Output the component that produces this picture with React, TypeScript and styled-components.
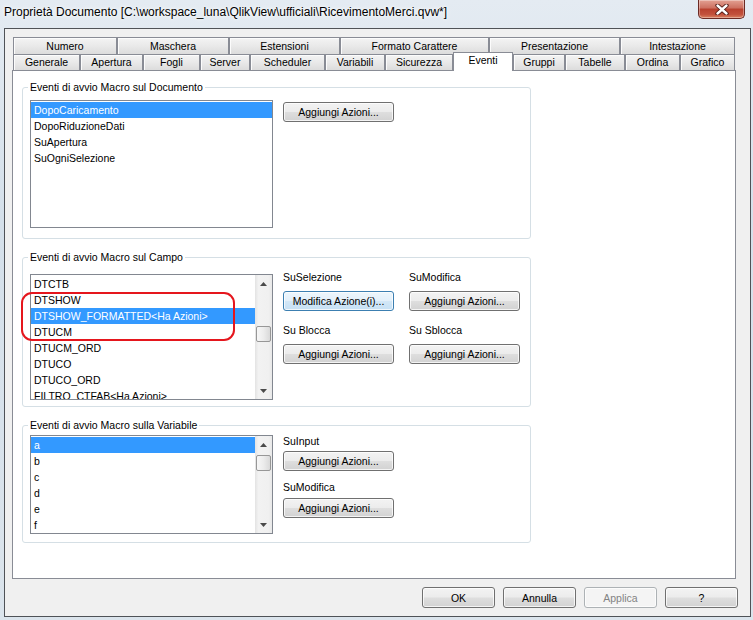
import styled, { createGlobalStyle } from "styled-components";

const GlobalStyle = createGlobalStyle`
  html, body {
    margin: 0;
    padding: 0;
  }
  body {
    width: 753px;
    height: 620px;
    overflow: hidden;
    background: linear-gradient(180deg, #e4ebf2 0%, #d5e0ea 35%, #dbe4ec 100%);
    font-family: "Liberation Sans", Arial, sans-serif;
    font-size: 10.5px;
    color: #000;
  }
`;

const Window = styled.div`
  width: 753px;
  height: 620px;
  display: flex;
  flex-direction: column;
`;

const TitleBar = styled.div`
  height: 28px;
  flex: none;
  display: flex;
  justify-content: space-between;
  align-items: flex-start;
  padding: 0 8px 0 4px;
  box-sizing: border-box;
`;

const Title = styled.div`
  margin-top: 5px;
  font-size: 12px;
  line-height: 14px;
  white-space: nowrap;
  text-shadow: 0 0 6px #fff, 0 0 3px #fff;
`;

const CloseButton = styled.div`
  width: 47px;
  height: 19px;
  box-sizing: border-box;
  border: 1px solid #6b2a24;
  border-top: none;
  border-radius: 0 0 5px 5px;
  background: linear-gradient(180deg, #e3a193 0%, #cc6f5f 45%, #b8402e 50%, #c2513c 80%, #d9805f 100%);
  box-shadow: inset 0 0 0 1px rgba(255, 255, 255, 0.35);
  display: flex;
  align-items: center;
  justify-content: center;
`;

const ClientArea = styled.div`
  flex: 1;
  margin: 0 2px 3px 4px;
  border: 1px solid #4f5257;
  background: #f0f0f0;
  display: flex;
  flex-direction: column;
  padding-top: 8px;
  min-height: 0;
`;

const TabStrip = styled.div`
  margin-left: 8px;
  display: flex;
  flex-direction: column;
`;

const TabRow = styled.div<{ $h: number }>`
  display: flex;
  align-items: flex-start;
  height: ${(p) => p.$h}px;
`;

const Tab = styled.div<{ $w: number; $h: number; $active?: boolean }>`
  box-sizing: border-box;
  flex: none;
  width: ${(p) => p.$w}px;
  height: ${(p) => (p.$active ? p.$h + 3 : p.$h)}px;
  margin-top: ${(p) => (p.$active ? -2 : 0)}px;
  border: 1px solid #898c95;
  border-bottom: none;
  background: ${(p) => (p.$active ? "#ffffff" : "linear-gradient(180deg, #f4f4f4 0%, #e9e9e9 50%, #dcdcdc 100%)")};
  box-shadow: ${(p) => (p.$active ? "none" : "inset 1px 1px 0 #fcfcfc")};
  position: ${(p) => (p.$active ? "relative" : "static")};
  z-index: ${(p) => (p.$active ? 1 : 0)};
  text-align: center;
  line-height: ${(p) => p.$h - 1}px;
  padding-bottom: ${(p) => (p.$active ? 3 : 0)}px;
  white-space: nowrap;
`;

const Panel = styled.div`
  flex: 1;
  margin: 0 14px 0 7px;
  border: 1px solid #898c95;
  background: #ffffff;
  padding: 9px 0 0 9px;
  display: flex;
  flex-direction: column;
  gap: 11px;
`;

const Group = styled.fieldset<{ $pt: number; $pb: number }>`
  margin: 0;
  width: 509px;
  min-inline-size: 0;
  box-sizing: border-box;
  border: 1px solid #d5dfe5;
  border-radius: 3px;
  padding: ${(p) => p.$pt}px 7px ${(p) => p.$pb}px 7px;
`;

const Legend = styled.legend`
  padding: 0 2px;
  margin-left: -2px;
  line-height: 14px;
  font-size: 10.5px;
`;

const GroupBody = styled.div`
  display: flex;
  align-items: flex-start;
  gap: 10px;
`;

const ListWrap = styled.div<{ $mt: number }>`
  position: relative;
  margin-top: ${(p) => p.$mt}px;
`;

const List = styled.div<{ $h: number }>`
  box-sizing: border-box;
  width: 243px;
  height: ${(p) => p.$h}px;
  border: 1px solid #828790;
  background: #ffffff;
  display: flex;
  overflow: hidden;
`;

const Rows = styled.div`
  flex: 1;
  min-width: 0;
  padding-top: 1px;
  overflow: hidden;
`;

const Row = styled.div<{ $selected?: boolean }>`
  height: 16px;
  line-height: 16px;
  padding-left: 3px;
  white-space: nowrap;
  overflow: hidden;
  background: ${(p) => (p.$selected ? "#3399ff" : "transparent")};
  color: ${(p) => (p.$selected ? "#ffffff" : "#000000")};
`;

const ScrollBar = styled.div`
  width: 17px;
  flex: none;
  display: flex;
  flex-direction: column;
  background: linear-gradient(90deg, #e3e3e3 0%, #f2f2f2 20%, #f0f0f0 80%, #e8e8e8 100%);
`;

const ArrowButton = styled.div`
  height: 17px;
  flex: none;
  display: flex;
  align-items: center;
  justify-content: center;
`;

const Track = styled.div`
  flex: 1;
`;

const Thumb = styled.div<{ $top: number }>`
  box-sizing: border-box;
  height: 16px;
  margin: ${(p) => p.$top}px 1px 0 1px;
  border: 1px solid #979797;
  border-radius: 2px;
  background: linear-gradient(90deg, #f7f7f7 0%, #ececec 50%, #d9d9d9 100%);
`;

const Annotation = styled.div`
  position: absolute;
  left: -9px;
  top: 18px;
  width: 214px;
  height: 49px;
  box-sizing: border-box;
  border: 2px solid #e5161d;
  border-radius: 11px;
  pointer-events: none;
`;

const ActionGrid = styled.div<{ $rowGap: number }>`
  display: grid;
  grid-template-columns: 111px 111px;
  column-gap: 15px;
  row-gap: ${(p) => p.$rowGap}px;
`;

const ActionSlot = styled.div<{ $labelGap: number }>`
  display: flex;
  flex-direction: column;
  gap: ${(p) => p.$labelGap}px;
`;

const SlotLabel = styled.div`
  line-height: 14px;
  white-space: nowrap;
`;

const Button = styled.button<{ $focused?: boolean; $mt?: number }>`
  box-sizing: border-box;
  width: 111px;
  height: 20px;
  margin: ${(p) => p.$mt ?? 0}px 0 0 0;
  padding: 0;
  flex: none;
  font-family: "Liberation Sans", Arial, sans-serif;
  font-size: 10.5px;
  color: #000;
  border: 1px solid ${(p) => (p.$focused ? "#3c7fb1" : "#707070")};
  border-radius: 3px;
  background: ${(p) =>
    p.$focused
      ? "linear-gradient(180deg, #edf6fc 0%, #e3f0fa 48%, #d2e7f7 52%, #c6e0f4 100%)"
      : "linear-gradient(180deg, #f3f3f3 0%, #ececec 48%, #dedede 52%, #d2d2d2 100%)"};
  box-shadow: inset 0 0 0 1px rgba(255, 255, 255, 0.75);
`;

const Footer = styled.div`
  flex: none;
  display: flex;
  justify-content: flex-end;
  gap: 8px;
  padding: 8px 12px 8px 0;
`;

const DialogButton = styled(Button)<{ $disabled?: boolean }>`
  width: 73px;
  height: 21px;
  border-color: ${(p) => (p.$disabled ? "#adb2b5" : "#707070")};
  background: ${(p) =>
    p.$disabled
      ? "#f4f4f4"
      : "linear-gradient(180deg, #f3f3f3 0%, #ececec 48%, #dedede 52%, #d2d2d2 100%)"};
  color: ${(p) => (p.$disabled ? "#838383" : "#000")};
`;

function Arrow({ down }: { down?: boolean }) {
  return (
    <svg width="7" height="4" viewBox="0 0 7 4">
      <path d={down ? "M0 0h7L3.5 4z" : "M0 4h7L3.5 0z"} fill="#4a4a4a" />
    </svg>
  );
}

function CloseGlyph() {
  return (
    <svg width="14" height="11" viewBox="0 0 14 11">
      <path d="M2.5 1.5l9 8M11.5 1.5l-9 8" stroke="#4a1510" strokeWidth="4.2" strokeLinecap="round" />
      <path d="M2.5 1.5l9 8M11.5 1.5l-9 8" stroke="#ffffff" strokeWidth="2.4" strokeLinecap="round" />
    </svg>
  );
}

type ListBoxProps = {
  items: string[];
  selected: number;
  height: number;
  thumbTop?: number;
};

function ListBox({ items, selected, height, thumbTop }: ListBoxProps) {
  return (
    <List $h={height}>
      <Rows>
        {items.map((item, i) => (
          <Row key={item} $selected={i === selected}>
            {item}
          </Row>
        ))}
      </Rows>
      {thumbTop !== undefined ? (
        <ScrollBar>
          <ArrowButton>
            <Arrow />
          </ArrowButton>
          <Track>
            <Thumb $top={thumbTop} />
          </Track>
          <ArrowButton>
            <Arrow down />
          </ArrowButton>
        </ScrollBar>
      ) : null}
    </List>
  );
}

const backTabs = [
  { label: "Numero", w: 104 },
  { label: "Maschera", w: 112 },
  { label: "Estensioni", w: 111 },
  { label: "Formato Carattere", w: 149 },
  { label: "Presentazione", w: 131 },
  { label: "Intestazione", w: 115 },
];

const frontTabs = [
  { label: "Generale", w: 67 },
  { label: "Apertura", w: 63 },
  { label: "Fogli", w: 57 },
  { label: "Server", w: 50 },
  { label: "Scheduler", w: 75 },
  { label: "Variabili", w: 60 },
  { label: "Sicurezza", w: 68 },
  { label: "Eventi", w: 60 },
  { label: "Gruppi", w: 52 },
  { label: "Tabelle", w: 60 },
  { label: "Ordina", w: 55 },
  { label: "Grafico", w: 55 },
];

const docEvents = ["DopoCaricamento", "DopoRiduzioneDati", "SuApertura", "SuOgniSelezione"];

const fieldEvents = [
  "DTCTB",
  "DTSHOW",
  "DTSHOW_FORMATTED<Ha Azioni>",
  "DTUCM",
  "DTUCM_ORD",
  "DTUCO",
  "DTUCO_ORD",
  "FILTRO_CTFAB<Ha Azioni>",
];

const variables = ["a", "b", "c", "d", "e", "f"];

export default function App() {
  return (
    <>
      <GlobalStyle />
      <Window>
        <TitleBar>
          <Title>Proprietà Documento [C:\workspace_luna\QlikView\ufficiali\RicevimentoMerci.qvw*]</Title>
          <CloseButton>
            <CloseGlyph />
          </CloseButton>
        </TitleBar>
        <ClientArea>
          <TabStrip>
            <TabRow $h={17}>
              {backTabs.map((t) => (
                <Tab key={t.label} $w={t.w} $h={17}>
                  {t.label}
                </Tab>
              ))}
            </TabRow>
            <TabRow $h={16}>
              {frontTabs.map((t) => (
                <Tab key={t.label} $w={t.w} $h={16} $active={t.label === "Eventi"}>
                  {t.label}
                </Tab>
              ))}
            </TabRow>
          </TabStrip>
          <Panel>
            <Group $pt={6} $pb={10}>
              <Legend>Eventi di avvio Macro sul Documento</Legend>
              <GroupBody>
                <ListWrap $mt={0}>
                  <ListBox items={docEvents} selected={0} height={128} />
                </ListWrap>
                <Button $mt={2}>Aggiungi Azioni...</Button>
              </GroupBody>
            </Group>

            <Group $pt={6} $pb={6}>
              <Legend>Eventi di avvio Macro sul Campo</Legend>
              <GroupBody>
                <ListWrap $mt={4}>
                  <ListBox items={fieldEvents} selected={2} height={126} thumbTop={34} />
                  <Annotation />
                </ListWrap>
                <ActionGrid $rowGap={12}>
                  <ActionSlot $labelGap={7}>
                    <SlotLabel>SuSelezione</SlotLabel>
                    <Button $focused>Modifica Azione(i)...</Button>
                  </ActionSlot>
                  <ActionSlot $labelGap={7}>
                    <SlotLabel>SuModifica</SlotLabel>
                    <Button>Aggiungi Azioni...</Button>
                  </ActionSlot>
                  <ActionSlot $labelGap={7}>
                    <SlotLabel>Su Blocca</SlotLabel>
                    <Button>Aggiungi Azioni...</Button>
                  </ActionSlot>
                  <ActionSlot $labelGap={7}>
                    <SlotLabel>Su Sblocca</SlotLabel>
                    <Button>Aggiungi Azioni...</Button>
                  </ActionSlot>
                </ActionGrid>
              </GroupBody>
            </Group>

            <Group $pt={2} $pb={8}>
              <Legend>Eventi di avvio Macro sulla Variabile</Legend>
              <GroupBody>
                <ListWrap $mt={1}>
                  <ListBox items={variables} selected={0} height={99} thumbTop={2} />
                </ListWrap>
                <ActionGrid $rowGap={9}>
                  <ActionSlot $labelGap={3}>
                    <SlotLabel>SuInput</SlotLabel>
                    <Button>Aggiungi Azioni...</Button>
                  </ActionSlot>
                  <div />
                  <ActionSlot $labelGap={4}>
                    <SlotLabel>SuModifica</SlotLabel>
                    <Button>Aggiungi Azioni...</Button>
                  </ActionSlot>
                </ActionGrid>
              </GroupBody>
            </Group>
          </Panel>
          <Footer>
            <DialogButton>OK</DialogButton>
            <DialogButton>Annulla</DialogButton>
            <DialogButton $disabled>Applica</DialogButton>
            <DialogButton>?</DialogButton>
          </Footer>
        </ClientArea>
      </Window>
    </>
  );
}
